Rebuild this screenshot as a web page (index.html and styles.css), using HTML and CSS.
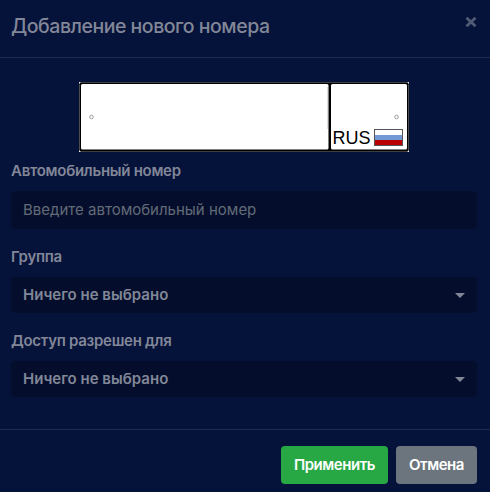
FILE: index.html
```html
<!DOCTYPE html>
<html lang="ru">
<head>
<meta charset="utf-8">
<title>Добавление нового номера</title>
<link rel="stylesheet" href="styles.css">
</head>
<body>
<form class="modal">
  <header class="modal-header">
    <h1 class="title"><span>Добавление нового номера</span></h1>
    <button class="close" type="button"><svg width="12" height="12" viewBox="0 0 12 12"><path d="M1.500 1.700 10.500 10.300M10.500 1.700 1.500 10.300"/></svg></button>
  </header>
  <main class="modal-body">
    <svg class="plate" width="330" height="70" viewBox="0 0 330 70">
      <rect width="330" height="70" fill="#fff"/>
      <rect x="0.300" y="0.300" width="329.400" height="69.400" rx="2" fill="#000"/>
      <rect x="2" y="2" width="247.500" height="65.500" rx="1.5" fill="#fff"/>
      <rect x="252" y="2" width="76" height="65.500" rx="1.5" fill="#fff"/>
      <path d="M248.500 5v42" stroke="#ddd"/>
      <circle cx="12.500" cy="35" r="1.800" class="hole"/>
      <circle cx="317.500" cy="35" r="1.800" class="hole"/>
      <text x="253.500" y="62" class="region" textLength="38" lengthAdjust="spacingAndGlyphs">RUS</text>
      <rect x="295" y="47" width="29" height="17" fill="#555"/>
      <rect x="296" y="48" width="27" height="5" fill="#fff"/>
      <rect x="296" y="53" width="27" height="5" fill="#7399d5"/>
      <rect x="296" y="58" width="27" height="5" fill="#b90000"/>
    </svg>
    <div class="field">
      <label class="label label-number">Автомобильный номер</label>
      <div class="control control-input"><span class="placeholder">Введите автомобильный номер</span></div>
    </div>
    <div class="field">
      <label class="label label-group">Группа</label>
      <div class="control"><span class="value">Ничего не выбрано</span><i class="caret"></i></div>
    </div>
    <div class="field">
      <label class="label label-access">Доступ разрешен для</label>
      <div class="control"><span class="value">Ничего не выбрано</span><i class="caret"></i></div>
    </div>
  </main>
  <footer class="modal-footer">
    <button class="btn btn-apply" type="button">Применить</button>
    <button class="btn btn-cancel" type="button">Отмена</button>
  </footer>
</form>
</body>
</html>
```
FILE: styles.css
```css
* { box-sizing: border-box; }
body {
  margin: 0;
  background: #05123a;
  color: #828798;
  font: 500 16px/24px Inter, "Liberation Sans", sans-serif;
  overflow: hidden;
}
.modal { display: flex; flex-direction: column; height: 492px; }
.modal-header {
  display: flex;
  justify-content: space-between;
  align-items: flex-start;
  height: 58px;
  padding: 11px 13px 0 11px;
  border-bottom: 1px solid #1e2a4e;
}
.title { margin: 0; font-size: 19.5px; line-height: 30px; font-weight: 550; letter-spacing: -0.48px; white-space: nowrap; }
.close { display: flex; margin: 5px 0 0; padding: 0; border: 0; background: none; }
.close path { fill: none; stroke: #505a75; stroke-width: 2.9; }
.modal-body { flex: 1; padding: 24px 13px 0 11px; }
.plate { display: block; margin: 0 auto 7px 68px; }
.hole { fill: #fff; stroke: #888; stroke-width: 0.8; }
.region { font: 18px "Liberation Sans", Arial, sans-serif; fill: #000; }
.field { margin-bottom: 16px; }
.label { display: block; margin-bottom: 8px; font-size: 15px; font-weight: 600; letter-spacing: -0.28px; white-space: nowrap; }
.control {
  display: flex;
  align-items: center;
  justify-content: space-between;
  height: 36px;
  padding: 0 12px;
  border-radius: 4px;
  background: #040e2c;
  font-size: 15px;
  white-space: nowrap;
}
.control-input { height: 38px; }
.placeholder { color: #626b77; font-weight: 400; }
.value { font-weight: 600; letter-spacing: 0.01px; }
.caret { border: 5px solid transparent; border-top: 5px solid #828798; border-bottom: 0; }
.modal-footer {
  display: flex;
  justify-content: flex-end;
  gap: 8px;
  height: 63px;
  padding: 16px 13px 8px;
  border-top: 1px solid #1e2a4e;
}
.btn {
  height: 38px;
  padding: 0;
  border: 0;
  border-radius: 4px;
  color: #fff;
  font: inherit;
  font-size: 15px;
  font-weight: 600;
  letter-spacing: -0.45px;
}
.btn-apply { width: 107px; background: #28a745; }
.btn-cancel { width: 81px; background: #6c757d; }
```
